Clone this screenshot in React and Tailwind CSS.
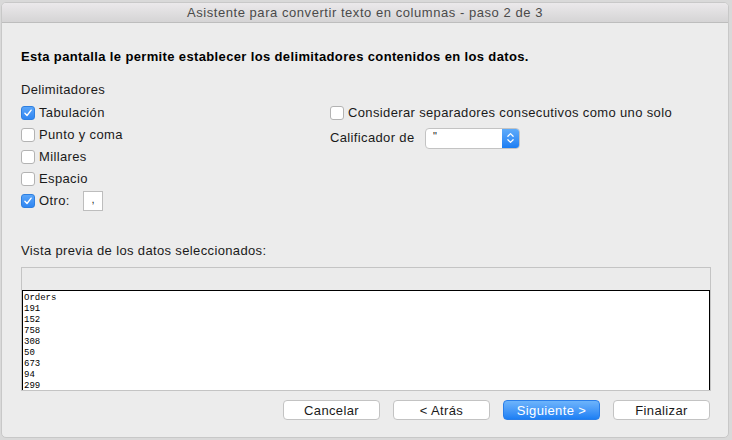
import React from "react";

const delimiters = [
  { label: "Tabulación", checked: true },
  { label: "Punto y coma", checked: false },
  { label: "Millares", checked: false },
  { label: "Espacio", checked: false },
];

const previewRows = ["Orders", "191", "152", "758", "308", "50", "673", "94", "299"];

function Checkbox({ checked }) {
  if (checked) {
    return (
      <span className="flex h-[14px] w-[14px] shrink-0 items-center justify-center rounded-[3px] bg-gradient-to-b from-[#5aa5f9] to-[#2f86f2] border border-[#2e7fe0]">
        <svg viewBox="0 0 12 12" className="h-[10px] w-[10px]">
          <path d="M2.3 6.4 L4.8 9 L9.8 2.6" fill="none" stroke="white" strokeWidth="1.7" strokeLinecap="round" strokeLinejoin="round" />
        </svg>
      </span>
    );
  }
  return <span className="h-[14px] w-[14px] shrink-0 rounded-[3px] border border-[#b3b3b3] bg-white" />;
}

function Button({ children, primary }) {
  return (
    <button
      className={
        primary
          ? "h-[20px] w-[97px] rounded-[4px] border border-[#2a7ee8] bg-gradient-to-b from-[#6db4fb] to-[#1a7ff4] text-[13px] leading-none tracking-[0.36px] text-white"
          : "h-[20px] w-[97px] rounded-[4px] border border-[#c3c3c3] bg-white text-[13px] leading-none tracking-[0.36px] text-[#1a1a1a]"
      }
    >
      {children}
    </button>
  );
}

export default function App() {
  return (
    <div className="h-[440px] w-[732px] bg-[#d9d9d9] pl-[1px] pr-[3px] pt-[2px] pb-[2px] font-['Liberation_Sans',Arial,sans-serif] text-[#1a1a1a]">
      <div className="flex h-full flex-col overflow-hidden rounded-[5px] border border-[#c8c8c8] bg-[#ececec]">
        {/* Title bar */}
        <div className="flex h-[20px] shrink-0 items-center justify-center border-b border-[#bdbdbd] bg-gradient-to-b from-[#ebe9eb] to-[#d5d4d5] text-[13px] tracking-[0.55px] text-[#4a4a4a]">
          Asistente para convertir texto en columnas - paso 2 de 3
        </div>

        <div className="flex flex-1 flex-col pl-[19px] pr-[17px] tracking-[0.36px]">
          <p className="mt-[26px] text-[13px] font-bold leading-[16px] text-black">
            Esta pantalla le permite establecer los delimitadores contenidos en los datos.
          </p>

          <p className="mt-[17px] text-[13px] leading-[16px]">Delimitadores</p>

          <div className="mt-[4px] flex">
            <div className="flex w-[309px] flex-col">
              {delimiters.map((d) => (
                <label key={d.label} className="flex h-[22px] items-center gap-[4px] text-[13px]">
                  <Checkbox checked={d.checked} />
                  {d.label}
                </label>
              ))}
              <label className="flex h-[22px] items-center gap-[4px] text-[13px]">
                <Checkbox checked />
                Otro:
                <span className="ml-[9px] flex h-[20px] w-[20px] items-start justify-center border border-[#bdbdbd] bg-white pl-[1px] pt-[2px] text-[11px] leading-none">
                  ,
                </span>
              </label>
            </div>

            <div className="flex flex-col">
              <label className="flex h-[22px] items-center gap-[4px] text-[13px]">
                <Checkbox checked={false} />
                Considerar separadores consecutivos como uno solo
              </label>
              <div className="mt-[3px] flex h-[22px] items-center text-[13px]">
                <span className="w-[95px]">Calificador de</span>
                <div className="flex h-[21px] w-[95px] overflow-hidden rounded-[4px] border border-[#c3c3c3] bg-white">
                  <span className="flex-1 pl-[7px] pt-[2px] text-[11px] leading-none">"</span>
                  <span className="flex w-[17px] flex-col items-center justify-center bg-gradient-to-b from-[#5eabfa] to-[#1b7ef3]">
                    <svg viewBox="0 0 10 16" className="h-[14px] w-[9px]">
                      <path d="M2 6 L5 3 L8 6 M2 10 L5 13 L8 10" fill="none" stroke="white" strokeWidth="1.4" strokeLinecap="round" strokeLinejoin="round" />
                    </svg>
                  </span>
                </div>
              </div>
            </div>
          </div>

          <p className="mt-[31px] text-[13px] leading-[16px]">Vista previa de los datos seleccionados:</p>

          <div className="mt-[8px] flex w-[690px] flex-col border border-[#c4c4c4] bg-[#ebebeb]">
            <div className="h-[22px]" />
            <div className="h-[100px] overflow-hidden border-x border-t border-black bg-white pl-[1px] pt-[2px] font-['Liberation_Mono','DejaVu_Sans_Mono',monospace] text-[9px] leading-[11px] tracking-normal text-black">
              {previewRows.map((r, i) => (
                <div key={i}>{r}</div>
              ))}
            </div>
          </div>

          <div className="mt-[9px] flex w-[689px] justify-end gap-[13px]">
            <Button>Cancelar</Button>
            <Button>&lt; Atrás</Button>
            <Button primary>Siguiente &gt;</Button>
            <Button>Finalizar</Button>
          </div>
        </div>
      </div>
    </div>
  );
}
